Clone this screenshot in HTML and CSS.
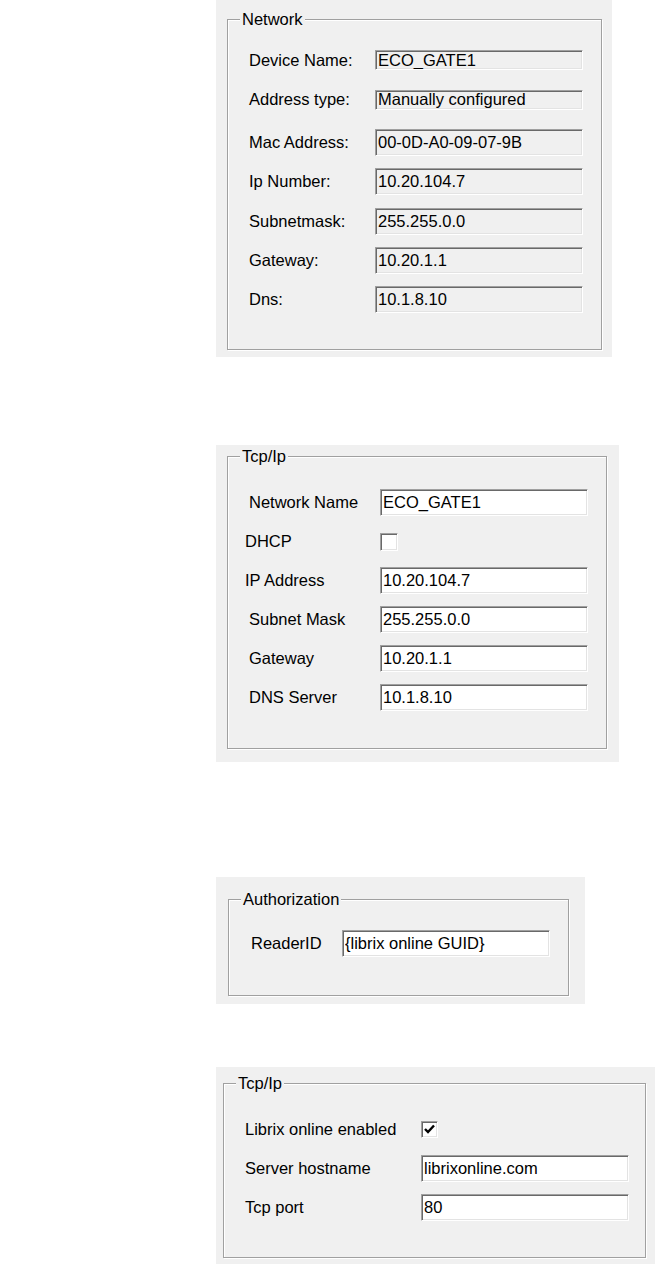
FILE: index.html
```html
<!DOCTYPE html>
<html lang="en">
<head>
<meta charset="UTF-8">
<meta name="viewport" content="width=device-width, initial-scale=1.0">
<title>Network Settings</title>
<link rel="stylesheet" href="styles.css">
</head>
<body>

<div class="panel p-net">
    <fieldset class="group">
        <legend>Network</legend>
        <div class="row short"><span class="label">Device Name:</span><input class="field ro" readonly value="ECO_GATE1"></div>
        <div class="row short"><span class="label">Address type:</span><input class="field ro" readonly value="Manually configured"></div>
        <div class="row"><span class="label">Mac Address:</span><input class="field ro" readonly value="00-0D-A0-09-07-9B"></div>
        <div class="row"><span class="label">Ip Number:</span><input class="field ro" readonly value="10.20.104.7"></div>
        <div class="row"><span class="label">Subnetmask:</span><input class="field ro" readonly value="255.255.0.0"></div>
        <div class="row"><span class="label">Gateway:</span><input class="field ro" readonly value="10.20.1.1"></div>
        <div class="row"><span class="label">Dns:</span><input class="field ro" readonly value="10.1.8.10"></div>
    </fieldset>
</div>

<div class="panel p-tcp">
    <fieldset class="group">
        <legend>Tcp/Ip</legend>
        <div class="row"><span class="label">Network Name</span><input class="field" value="ECO_GATE1"></div>
        <div class="row"><span class="label nudge">DHCP</span><span class="check"></span></div>
        <div class="row"><span class="label nudge">IP Address</span><input class="field" value="10.20.104.7"></div>
        <div class="row"><span class="label">Subnet Mask</span><input class="field" value="255.255.0.0"></div>
        <div class="row"><span class="label">Gateway</span><input class="field" value="10.20.1.1"></div>
        <div class="row"><span class="label">DNS Server</span><input class="field" value="10.1.8.10"></div>
    </fieldset>
</div>

<div class="panel p-auth">
    <fieldset class="group">
        <legend>Authorization</legend>
        <div class="row"><span class="label">ReaderID</span><input class="field" value="{librix online GUID}"></div>
    </fieldset>
</div>

<div class="panel p-lib">
    <fieldset class="group">
        <legend>Tcp/Ip</legend>
        <div class="row">
            <span class="label">Librix online enabled</span>
            <span class="check">
                <svg width="15" height="15" viewBox="0 0 15 15"><path d="M3 7 L6 10 L12 3.5" fill="none" stroke="#000" stroke-width="2.4"/></svg>
            </span>
        </div>
        <div class="row"><span class="label">Server hostname</span><input class="field" value="librixonline.com"></div>
        <div class="row"><span class="label">Tcp port</span><input class="field" value="80"></div>
    </fieldset>
</div>

</body>
</html>
```

FILE: styles.css
```css
body {
    margin: 0;
    background-color: #fff;
    font-family: "Liberation Sans", Arial, sans-serif;
    font-size: 16.5px;
    color: #000;
}

.panel {
    box-sizing: border-box;
    margin-left: 216px;
    background-color: #f0f0f0;
}

/* etched group box */
.group {
    margin: 0;
    padding: 0 0 0 12px;
    border: 1px solid #a0a0a0;
    box-shadow: 1px 1px 0 #fff, inset 1px 1px 0 #fff;
}

.group legend {
    padding: 0 2px;
    line-height: 19px;
    background-color: #f0f0f0;
}

.row {
    display: flex;
    align-items: center;
    min-height: 27px;
    margin-bottom: 12px;
    padding-left: 9px;
}

.group .row:last-child {
    margin-bottom: 0;
}

.label {
    flex: none;
    white-space: nowrap;
}

.label.nudge {
    margin-left: -4px;
}

.field {
    box-sizing: border-box;
    width: 208px;
    height: 27px;
    margin: 0;
    padding: 0 2px;
    font: inherit;
    color: #000;
    background-color: #fff;
    border: 1px solid;
    border-color: #a0a0a0 #fff #fff #a0a0a0;
    box-shadow: inset 1px 1px 0 #696969, inset -1px -1px 0 #e3e3e3;
    outline: none;
}

.field.ro {
    background-color: #f0f0f0;
}

.check {
    box-sizing: border-box;
    display: flex;
    align-items: center;
    justify-content: center;
    width: 17px;
    height: 17px;
    background-color: #fff;
    border: 1px solid;
    border-color: #a0a0a0 #fff #fff #a0a0a0;
    box-shadow: inset 1px 1px 0 #696969, inset -1px -1px 0 #e3e3e3;
}

/* Network */
.p-net {
    width: 396px;
    height: 357px;
    padding: 9.5px 10px 0 11px;
    margin-bottom: 88px;
}

.p-net .group {
    padding-top: 21.5px;
    padding-bottom: 36px;
}

.p-net .row {
    margin-bottom: 12.25px;
}

.p-net .row.short {
    min-height: 20px;
    margin-bottom: 19.5px;
}

.p-net .row.short .field {
    height: 20px;
}

.p-net .label {
    width: 126px;
}

/* Tcp/Ip */
.p-tcp {
    width: 403px;
    height: 317px;
    padding: 1.5px 12px 0 11px;
    margin-bottom: 115px;
}

.p-tcp .group {
    padding-top: 23.5px;
    padding-bottom: 37px;
}

.p-tcp .label {
    width: 131px;
}

.p-tcp .label.nudge {
    width: 135px;
}

.p-tcp .check {
    width: 18px;
    height: 18px;
}

/* Authorization */
.p-auth {
    width: 369px;
    height: 127px;
    padding: 12.5px 16px 0 12px;
    margin-bottom: 63px;
}

.p-auth .group {
    padding-top: 21.5px;
    padding-bottom: 38px;
}

.p-auth .row {
    padding-left: 10px;
}

.p-auth .label {
    width: 91px;
}

/* Librix online */
.p-lib {
    width: 439px;
    height: 197px;
    padding: 6.5px 9px 0 7px;
}

.p-lib .group {
    padding-top: 23.5px;
    padding-bottom: 36px;
}

.p-lib .label {
    width: 176px;
}
```
